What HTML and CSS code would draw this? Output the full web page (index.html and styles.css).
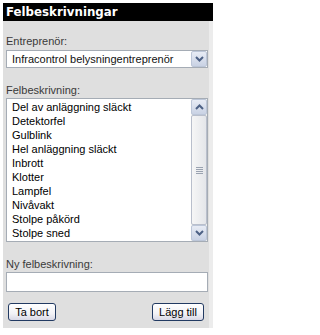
FILE: index.html
```html
<!DOCTYPE html>
<html lang="sv">
<head>
<meta charset="utf-8">
<title>Felbeskrivningar</title>
<link rel="stylesheet" href="styles.css">
</head>
<body>
<div class="panel">
  <div class="header">Felbeskrivningar</div>
  <div class="body">
    <div class="lbl">Entreprenör:</div>
    <div class="select">
      <span class="sel-text">Infracontrol belysningentreprenör</span>
      <span class="arrow-btn drop"><svg width="9" height="6" viewBox="0 0 9 6"><polyline points="1,1 4.5,4.5 8,1" fill="none" stroke="#4d6185" stroke-width="2"/></svg></span>
    </div>
    <div class="lbl gap">Felbeskrivning:</div>
    <div class="listbox">
      <ul class="items">
        <li>Del av anläggning släckt</li>
        <li>Detektorfel</li>
        <li>Gulblink</li>
        <li>Hel anläggning släckt</li>
        <li>Inbrott</li>
        <li>Klotter</li>
        <li>Lampfel</li>
        <li>Nivåvakt</li>
        <li>Stolpe påkörd</li>
        <li>Stolpe sned</li>
      </ul>
      <div class="scrollbar">
        <span class="arrow-btn sb"><svg width="9" height="6" viewBox="0 0 9 6"><polyline points="1,5 4.5,1.5 8,5" fill="none" stroke="#4d6185" stroke-width="2"/></svg></span>
        <div class="thumb"><span class="grip"></span></div>
        <span class="arrow-btn sb"><svg width="9" height="6" viewBox="0 0 9 6"><polyline points="1,1 4.5,4.5 8,1" fill="none" stroke="#4d6185" stroke-width="2"/></svg></span>
      </div>
    </div>
    <div class="lbl gap">Ny felbeskrivning:</div>
    <div class="text-input"></div>
    <div class="actions">
      <button class="btn btn-left">Ta bort</button>
      <button class="btn btn-right">Lägg till</button>
    </div>
  </div>
</div>
</body>
</html>
```
FILE: styles.css
```css
html, body {
  margin: 0;
  padding: 0;
  background: #ffffff;
}
body {
  font-family: "Liberation Sans", Arial, sans-serif;
  font-size: 11px;
  color: #000;
}
.panel {
  margin: 3px;
  width: 210px;
}
.header {
  background: #000;
  color: #fff;
  font-family: "DejaVu Sans", Verdana, sans-serif;
  font-weight: bold;
  font-size: 11.8px;
  height: 18px;
  line-height: 18px;
  padding-left: 3px;
}
.body {
  background: #dfdfdf;
  border-right: 4px solid #ececec;
  padding: 14px 1px 7px 3px;
  display: flex;
  flex-direction: column;
}
.lbl {
  color: #3a3a3a;
  line-height: 13px;
  height: 13px;
  margin-bottom: 2px;
}
.lbl.gap {
  margin-top: 16px;
  margin-bottom: 1px;
}
.select {
  height: 18px;
  box-sizing: border-box;
  border: 1px solid #a5acb5;
  background: #fff;
  display: flex;
  align-items: center;
  justify-content: space-between;
}
.sel-text {
  padding-left: 5px;
  color: #111;
}
.arrow-btn {
  box-sizing: border-box;
  width: 16px;
  height: 16px;
  border: 1px solid #bcc6d8;
  border-radius: 2px;
  background: linear-gradient(#e8ecf5, #c9d2e4);
  display: flex;
  align-items: center;
  justify-content: center;
}
.listbox {
  height: 144px;
  box-sizing: border-box;
  border: 1px solid #a5acb5;
  background: #fff;
  display: flex;
  justify-content: space-between;
}
.items {
  list-style: none;
  margin: 0;
  padding: 1px 0 0 5px;
}
.items li {
  height: 14px;
  line-height: 14px;
  white-space: nowrap;
}
.scrollbar {
  width: 16px;
  display: flex;
  flex-direction: column;
  background: #f4f4f2;
}
.thumb {
  flex: 1;
  box-sizing: border-box;
  border: 1px solid #b9bfcc;
  border-radius: 2px;
  background: linear-gradient(to right, #f6f6f6, #e4e6ea);
  display: flex;
  align-items: center;
  justify-content: center;
}
.grip {
  width: 7px;
  height: 7px;
  background: repeating-linear-gradient(#9aa2b0 0 1px, transparent 1px 2px);
}
.text-input {
  height: 20px;
  box-sizing: border-box;
  border: 1px solid #a5acb5;
  background: #fff;
}
.actions {
  display: flex;
  justify-content: space-between;
  margin-top: 11px;
  padding: 0 4px 0 2px;
}
.btn {
  font-family: "Liberation Sans", Arial, sans-serif;
  font-size: 11px;
  color: #000;
  height: 18px;
  padding: 0;
  box-sizing: border-box;
  border: 1px solid #223a62;
  border-radius: 3px;
  background: linear-gradient(#ffffff, #f2f2f6 60%, #d8d8e6);
  line-height: 16px;
}
.btn-left {
  width: 48px;
}
.btn-right {
  width: 52px;
}
```
